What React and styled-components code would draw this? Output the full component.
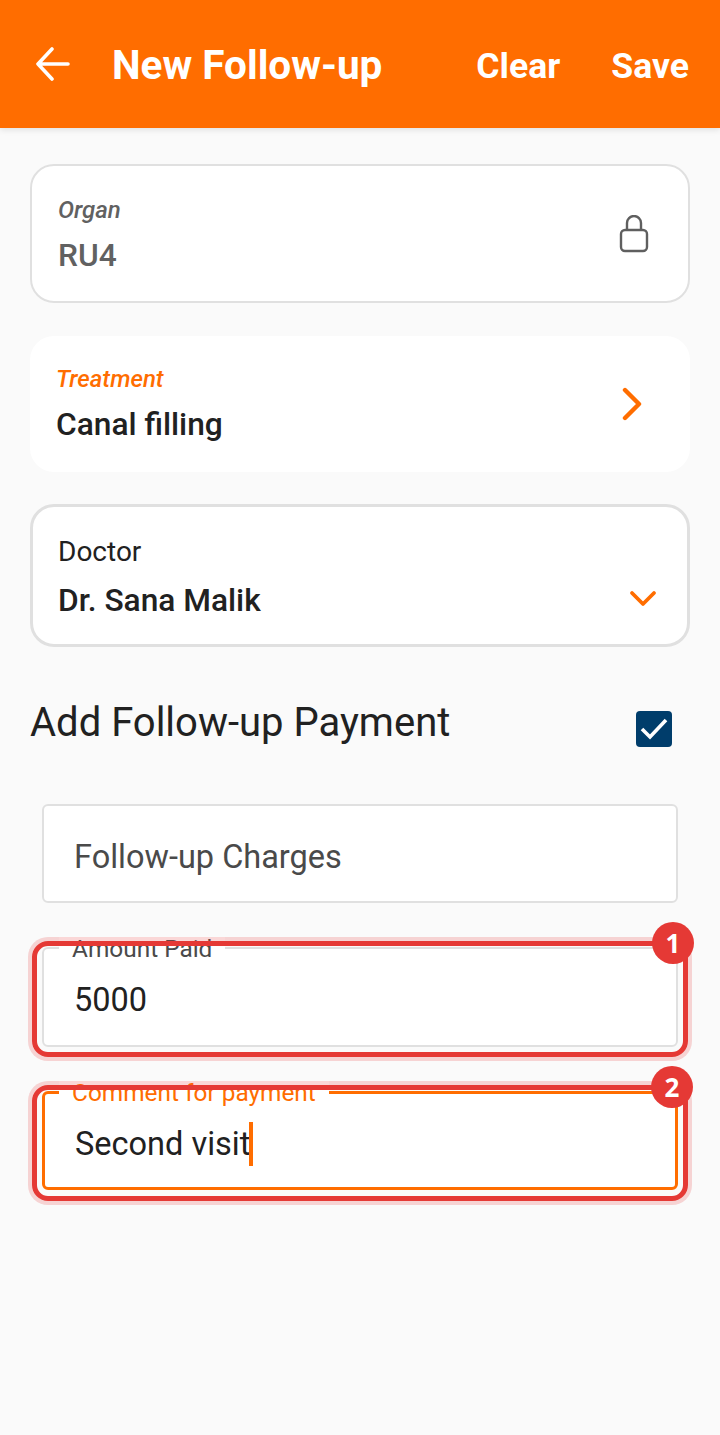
import React from 'react'
import styled, { createGlobalStyle } from 'styled-components'

const GlobalStyle = createGlobalStyle`
  html, body {
    margin: 0;
    padding: 0;
    background: #fafafa;
    font-family: Roboto, "Liberation Sans", sans-serif;
  }
  * {
    box-sizing: border-box;
  }
`

const Page = styled.div`
  width: 720px;
  height: 1435px;
  overflow: hidden;
  background: #fafafa;
`

const Header = styled.header`
  height: 128px;
  display: flex;
  align-items: center;
  padding: 0 31px 0 36px;
  background: #ff6d00;
  color: #fff;
  box-shadow: 0 2px 6px rgba(0, 0, 0, 0.1);
`

const BackIcon = styled.svg`
  width: 34px;
  height: 34px;
  flex: none;
`

const Title = styled.h1`
  margin: 2px 0 0 42px;
  flex: 1;
  font-size: 40.5px;
  line-height: 44px;
  font-weight: 700;
`

const HeaderAction = styled.span`
  margin: 4px 0 0 51px;
  font-size: 35.6px;
  line-height: 44px;
  font-weight: 700;
`

const Main = styled.main`
  display: flex;
  flex-direction: column;
  padding: 36px 30px 0;
`

const Card = styled.div`
  display: flex;
  align-items: center;
  justify-content: space-between;
  height: ${p => p.$height}px;
  margin-bottom: ${p => p.$gap}px;
  padding: 0 ${p => p.$right}px 0 ${p => p.$left}px;
  background: #fff;
  border: ${p => p.$border}px solid ${p => (p.$border ? '#e0e0e0' : 'transparent')};
  border-radius: 24px;
`

const CardText = styled.div`
  display: flex;
  flex-direction: column;
  gap: ${p => p.$gap}px;
  padding-top: ${p => p.$top || 0}px;
`

const CardLabel = styled.span`
  font-size: ${p => p.$size || 24}px;
  line-height: 30px;
  font-style: ${p => (p.$italic ? 'italic' : 'normal')};
  font-weight: ${p => p.$weight || 500};
  color: ${p => p.$color || '#212121'};
`

const CardValue = styled.span`
  font-size: 31.7px;
  line-height: 38px;
  font-weight: 500;
  color: ${p => p.$color || '#212121'};
`

const PaymentRow = styled.div`
  display: flex;
  align-items: center;
  justify-content: space-between;
  height: 48px;
  margin: 57px 18px 52px 0;
  font-size: 40px;
  color: #212121;
`

const PaymentTitle = styled.span`
  margin-top: -10px;
  line-height: 48px;
`

const Checkbox = styled.span`
  width: 36px;
  height: 36px;
  margin-top: 2px;
  display: flex;
  align-items: center;
  justify-content: center;
  background: #003d6b;
  border-radius: 4px;
`

const Field = styled.div`
  position: relative;
  height: ${p => p.$height}px;
  margin: 0 12px ${p => p.$gap}px;
  padding: 6px 30px 0;
  display: flex;
  align-items: center;
  background: #fff;
  border: ${p => (p.$focused ? 3 : 2)}px solid ${p => (p.$focused ? '#ff6d00' : '#e0e0e0')};
  border-radius: 6px;
  font-size: 32.5px;
  color: ${p => p.$color || '#212121'};
`

const FieldLabel = styled.span`
  position: absolute;
  left: ${p => p.$left}px;
  top: ${p => p.$top}px;
  padding: 0 13px;
  background: #fff;
  font-size: 24.4px;
  line-height: 24px;
  color: ${p => p.$color || '#4a4a4a'};
`

const Caret = styled.span`
  width: 4px;
  height: 44px;
  margin-left: -1px;
  background: #ff6d00;
`

const Highlight = styled.span`
  position: absolute;
  left: ${p => p.$side}px;
  right: ${p => p.$side}px;
  top: ${p => p.$top}px;
  bottom: ${p => p.$bottom}px;
  border: 5px solid #e53935;
  border-radius: 16px;
  box-shadow: 0 0 0 4px rgba(229, 57, 53, 0.2);
  pointer-events: none;
`

const Badge = styled.span`
  position: absolute;
  right: -18px;
  top: ${p => p.$top}px;
  width: 42px;
  height: 42px;
  display: flex;
  align-items: center;
  justify-content: center;
  border-radius: 50%;
  background: #e53935;
  color: #fff;
  font-family: "Open Sans", sans-serif;
  font-size: 26px;
  font-weight: 700;
`

const DownIconSlot = styled.span`
  display: flex;
  margin-top: 46px;
`

function LockIcon() {
  return (
    <svg width="30" height="38" viewBox="0 0 30 38" fill="none" stroke="#5f5f5f" strokeWidth="2.4">
      <path d="M8 15V8a7 7 0 0 1 14 0v7" />
      <rect x="2" y="15" width="26" height="21" rx="4" />
    </svg>
  )
}

function ChevronRight() {
  return (
    <svg width="20" height="34" viewBox="0 0 20 34" fill="none" stroke="#ff6d00" strokeWidth="4.4" strokeLinecap="round" strokeLinejoin="round">
      <path d="M3 3l14 14L3 31" />
    </svg>
  )
}

function ChevronDown() {
  return (
    <svg width="28" height="18" viewBox="0 0 28 18" fill="none" stroke="#ff6d00" strokeWidth="3.8" strokeLinecap="round" strokeLinejoin="round">
      <path d="M3 3l11 11L25 3" />
    </svg>
  )
}

export default function App() {
  return (
    <Page>
      <GlobalStyle />
      <Header>
        <BackIcon viewBox="0 0 34 34" fill="none" stroke="#fff" strokeWidth="3.6" strokeLinecap="round" strokeLinejoin="round">
          <path d="M32 17H2M16 2L2 17l14 15" />
        </BackIcon>
        <Title>New Follow-up</Title>
        <HeaderAction>Clear</HeaderAction>
        <HeaderAction>Save</HeaderAction>
      </Header>
      <Main>
        <Card $height={139} $gap={33} $left={26} $right={39} $border={2}>
          <CardText $gap={12} $top={2}>
            <CardLabel $italic $color="#616161">Organ</CardLabel>
            <CardValue $color="#616161">RU4</CardValue>
          </CardText>
          <LockIcon />
        </Card>
        <Card $height={136} $gap={32} $left={26} $right={48} $border={0}>
          <CardText $gap={12}>
            <CardLabel $italic $color="#ff6d00">Treatment</CardLabel>
            <CardValue>Canal filling</CardValue>
          </CardText>
          <ChevronRight />
        </Card>
        <Card $height={143} $gap={0} $left={25} $right={30} $border={3}>
          <CardText $gap={15} $top={6}>
            <CardLabel $size={28} $weight={400}>Doctor</CardLabel>
            <CardValue>Dr. Sana Malik</CardValue>
          </CardText>
          <DownIconSlot>
            <ChevronDown />
          </DownIconSlot>
        </Card>
        <PaymentRow>
          <PaymentTitle>Add Follow-up Payment</PaymentTitle>
          <Checkbox>
            <svg width="30" height="26" viewBox="0 0 30 26" fill="none" stroke="#fff" strokeWidth="3.6">
              <path d="M3 13l8 8L27 4" />
            </svg>
          </Checkbox>
        </PaymentRow>
        <Field $height={99} $gap={44} $color="#4a4a4a">Follow-up Charges</Field>
        <Field $height={100} $gap={44}>
          <FieldLabel $left={15} $top={-12}>Amount Paid</FieldLabel>
          5000
          <Highlight $side={-12} $top={-8} $bottom={-12} />
          <Badge $top={-27}>1</Badge>
        </Field>
        <Field $height={99} $gap={0} $focused>
          <FieldLabel $left={14} $top={-13} $color="#ff6d00">Comment for payment</FieldLabel>
          Second visit
          <Caret />
          <Highlight $side={-13} $top={-9} $bottom={-14} />
          <Badge $top={-28}>2</Badge>
        </Field>
      </Main>
    </Page>
  )
}
